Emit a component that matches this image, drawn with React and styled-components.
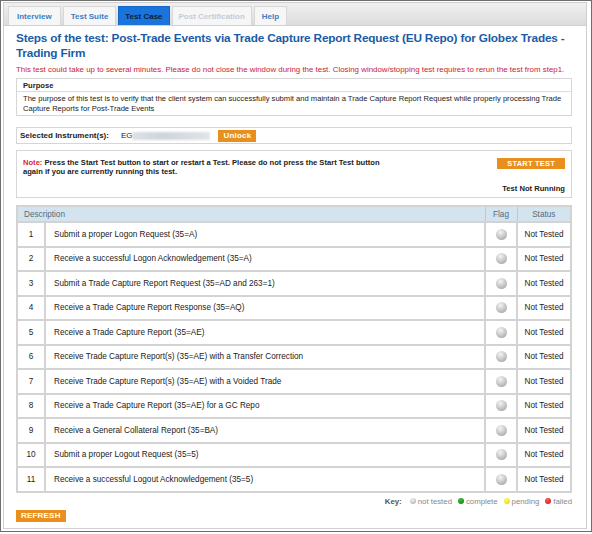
import React from 'react';
import styled, { createGlobalStyle } from 'styled-components';

const GlobalStyle = createGlobalStyle`
  html, body { margin: 0; padding: 0; background: #fff; }
  body { font-family: "Liberation Sans", Arial, sans-serif; }
`;

const Frame = styled.div`
  width: 592px;
  height: 532px;
  box-sizing: border-box;
  border: 1px solid #6e6e6e;
  padding: 1px 4px 2px 2px;
  background: #fff;
`;

const Panel = styled.div`
  height: 100%;
  box-sizing: border-box;
  border: 1px solid #cfcfcf;
  display: flex;
  flex-direction: column;
`;

const TabBar = styled.div`
  height: 22px;
  display: flex;
  align-items: flex-end;
  gap: 2px;
  padding-left: 4px;
  background: linear-gradient(#f0f0f0, #dcdcdc);
  border-bottom: 1px solid #d0d0d0;
`;

const Tab = styled.div`
  height: 19px;
  padding: 0 ${p => p.$pad || 8}px;
  display: flex;
  align-items: center;
  font-size: 8px;
  font-weight: bold;
  box-sizing: border-box;
  border: 1px solid ${p => (p.$active ? '#1466c8' : '#d8d8d8')};
  border-bottom: none;
  background: ${p => (p.$active ? '#1a74dc' : '#f6f6f6')};
  color: ${p => (p.$active ? '#0b2140' : p.$disabled ? '#c4ccd6' : '#3c7dc4')};
`;

const Content = styled.div`
  padding: 5px 14px 0 12px;
  display: flex;
  flex-direction: column;
`;

const Title = styled.h1`
  margin: 0;
  font-size: 11.8px;
  letter-spacing: -0.18px;
  line-height: 15px;
  color: #1b5ba6;
  font-weight: bold;
`;

const Warning = styled.p`
  margin: 4px 0 4px;
  font-size: 7.9px;
  color: #cc2233;
`;

const Box = styled.div`
  border: 1px solid #d6d6d6;
  margin-bottom: ${p => p.$mb || 0}px;
  font-size: 7.6px;
  color: #222;
`;

const BoxHead = styled.div`
  font-weight: bold;
  line-height: 10px;
  padding: 2px 6px 0;
  border-bottom: 1px solid #dcdcdc;
`;

const BoxBody = styled.div`
  padding: 2px 6px 1px;
  line-height: 10px;
`;

const InstrumentRow = styled.div`
  display: flex;
  align-items: center;
  height: 15px;
  padding-left: 3px;
  font-size: 8px;
  font-weight: bold;
`;

const Blurred = styled.span`
  display: inline-block;
  width: 78px;
  height: 8px;
  margin-right: 8px;
  background: linear-gradient(90deg, #dde1e6, #cfd5dc 40%, #e1e4e8);
  filter: blur(1px);
`;

const OrangeButton = styled.button`
  border: none;
  background: #e88f1e;
  color: #fff;
  font-family: inherit;
  font-weight: bold;
  font-size: ${p => p.$size || 8}px;
  padding: 0 ${p => p.$pad || 6}px;
  height: ${p => p.$h || 12}px;
  line-height: ${p => p.$h || 12}px;
  letter-spacing: 0.2px;
  cursor: pointer;
`;

const NoteBox = styled(Box)`
  display: grid;
  grid-template-columns: 1fr auto;
  padding: 6px 6px 4px 6px;
  font-size: 7.6px;
  height: 48px;
  box-sizing: border-box;
`;

const NoteText = styled.div`
  font-weight: bold;
  line-height: 9px;
  padding-top: 1px;
  span { color: #e0262e; }
`;

const NoteSide = styled.div`
  display: flex;
  flex-direction: column;
  align-items: flex-end;
  justify-content: space-between;
  font-weight: bold;
  padding-top: 1px;
`;

const Table = styled.table`
  width: 100%;
  border-collapse: collapse;
  border: 2px solid #d3d3d3;
  font-size: 8.2px;
  color: #222;
  margin-top: 7px;

  th {
    background: #d3e4ef;
    color: #5a6a78;
    font-weight: normal;
    height: 14px;
    border: 1px solid #c6c6c6;
    padding: 0 6px;
  }
  td {
    height: 22.5px;
    border: 2px solid #d3d3d3;
    padding: 0;
  }
`;

const NumCell = styled.td`
  width: 26px;
  text-align: center;
`;

const DescCell = styled.td`
  padding-left: 8px !important;
`;

const FlagCell = styled.td`
  width: 30px;
  text-align: center;
`;

const StatusCell = styled.td`
  width: 52px;
  text-align: center;
`;

const Ball = styled.span`
  display: inline-block;
  width: ${p => p.$s || 10}px;
  height: ${p => p.$s || 10}px;
  border-radius: 50%;
  vertical-align: middle;
  background: radial-gradient(circle at 40% 30%, ${p => p.$light || '#f4f4f4'}, ${p => p.$dark || '#9a9a9a'});
`;

const Footer = styled.div`
  display: flex;
  justify-content: flex-end;
  align-items: center;
  gap: 3px;
  font-size: 7.8px;
  color: #888;
  margin-top: 4px;
  b { color: #555; margin-right: 2px; }
`;

const KeyItem = styled.span`
  display: inline-flex;
  align-items: center;
  gap: 2px;
  margin-left: 3px;
`;

const RefreshRow = styled.div`
  display: flex;
  margin-top: 4px;
`;

const steps = [
  'Submit a proper Logon Request (35=A)',
  'Receive a successful Logon Acknowledgement (35=A)',
  'Submit a Trade Capture Report Request (35=AD and 263=1)',
  'Receive a Trade Capture Report Response (35=AQ)',
  'Receive a Trade Capture Report (35=AE)',
  'Receive Trade Capture Report(s) (35=AE) with a Transfer Correction',
  'Receive Trade Capture Report(s) (35=AE) with a Voided Trade',
  'Receive a Trade Capture Report (35=AE) for a GC Repo',
  'Receive a General Collateral Report (35=BA)',
  'Submit a proper Logout Request (35=5)',
  'Receive a successful Logout Acknowledgement (35=5)',
];

const keys = [
  { label: 'not tested', light: '#f2f2f2', dark: '#a8a8a8' },
  { label: 'complete', light: '#3cbf3c', dark: '#0d7a10' },
  { label: 'pending', light: '#fffb6a', dark: '#e2cf00' },
  { label: 'failed', light: '#ff5a5a', dark: '#cc1010' },
];

export default function App() {
  return (
    <>
      <GlobalStyle />
      <Frame>
        <Panel>
          <TabBar>
            <Tab $pad={8}>Interview</Tab>
            <Tab $pad={7}>Test Suite</Tab>
            <Tab $active $pad={6}>Test Case</Tab>
            <Tab $disabled $pad={6}>Post Certification</Tab>
            <Tab $pad={7}>Help</Tab>
          </TabBar>
          <Content>
            <Title>
              Steps of the test: Post-Trade Events via Trade Capture Report Request (EU Repo) for Globex Trades - Trading Firm
            </Title>
            <Warning>
              This test could take up to several minutes. Please do not close the window during the test. Closing window/stopping test requires to rerun the test from step1.
            </Warning>
            <Box $mb={11}>
              <BoxHead>Purpose</BoxHead>
              <BoxBody>
                The purpose of this test is to verify that the client system can successfully submit and maintain a Trade Capture Report Request while properly processing Trade Capture Reports for Post-Trade Events
              </BoxBody>
            </Box>
            <Box $mb={6}>
              <InstrumentRow>
                <span style={{ marginRight: 12 }}>Selected Instrument(s):</span>
                <span style={{ fontWeight: 'normal' }}>EG</span>
                <Blurred />
                <OrangeButton $pad={5}>Unlock</OrangeButton>
              </InstrumentRow>
            </Box>
            <NoteBox>
              <NoteText>
                <span>Note:</span> Press the Start Test button to start or restart a Test. Please do not press the Start Test button
                <br />
                again if you are currently running this test.
              </NoteText>
              <NoteSide>
                <OrangeButton $size={7.5} $pad={10} $h={11}>START TEST</OrangeButton>
                <div>Test Not Running</div>
              </NoteSide>
            </NoteBox>
            <Table>
              <thead>
                <tr>
                  <th colSpan={2} style={{ textAlign: 'left' }}>Description</th>
                  <th>Flag</th>
                  <th>Status</th>
                </tr>
              </thead>
              <tbody>
                {steps.map((s, i) => (
                  <tr key={i}>
                    <NumCell>{i + 1}</NumCell>
                    <DescCell>{s}</DescCell>
                    <FlagCell><Ball $s={11} /></FlagCell>
                    <StatusCell>Not Tested</StatusCell>
                  </tr>
                ))}
              </tbody>
            </Table>
            <Footer>
              <b>Key:</b>
              {keys.map(k => (
                <KeyItem key={k.label}>
                  <Ball $s={6} $light={k.light} $dark={k.dark} />
                  {k.label}
                </KeyItem>
              ))}
            </Footer>
            <RefreshRow>
              <OrangeButton $pad={5} $h={12}>REFRESH</OrangeButton>
            </RefreshRow>
          </Content>
        </Panel>
      </Frame>
    </>
  );
}
